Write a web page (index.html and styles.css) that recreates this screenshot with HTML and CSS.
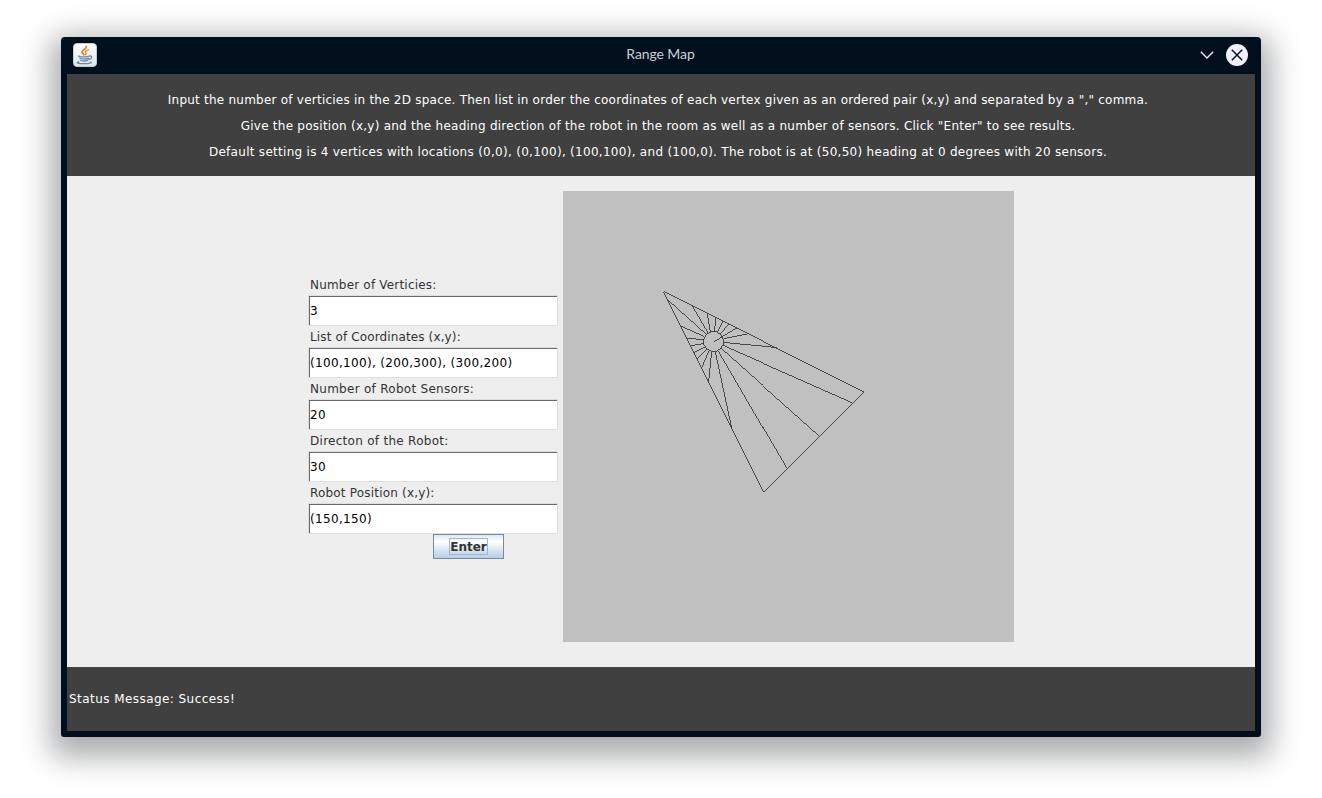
FILE: index.html
```html
<!DOCTYPE html>
<html lang="en">
<head>
<meta charset="utf-8">
<title>Range Map</title>
<link rel="stylesheet" href="styles.css">
</head>
<body>
<div class="window">
  <header class="titlebar">
    <svg class="app-icon" viewBox="0 0 24 24">
      <defs><linearGradient id="tile" x1="0" y1="0" x2="0" y2="1"><stop offset="0" stop-color="#fff"/><stop offset="1" stop-color="#dfe4e8"/></linearGradient></defs>
      <rect x=".5" y=".5" width="23" height="23" rx="3.5" fill="url(#tile)" stroke="#c3ccd3"/>
      <g fill="none" stroke-linecap="round">
        <path d="M13.3 3.3c.5 2.800-5 3.800-4.300 6.300.3 1 1.500 1.400 1.800 2.200" stroke="#ee7721" stroke-width="1.7"/>
        <path d="M15.500 6.700c-2.200.7-3.800 1.800-2.700 3.200.5.7.3 1.300-.2 1.900" stroke="#ee7721" stroke-width="1.2"/>
        <path d="M6 13c-1.500 1.200 9 1.200 10.300 0M6.700 15.200c.8 1 7.600 1 8.800.2M7.600 17.300c1.200.9 5.500.9 7 .1M16.500 13.100c3.500-.8 2.500 3-.6 3.400M5.800 19c-3 .6-1.500 1.700 5 1.700 5.500 0 8.300-.9 7.200-1.800" stroke="#6a8ca8" stroke-width="1.300"/>
      </g>
    </svg>
    <h1 class="title">Range Map</h1>
    <div class="controls">
      <svg class="shade" viewBox="0 0 14 8"><path d="M.8.8 7 7 13.200.8"/></svg>
      <svg class="close" viewBox="0 0 22 22"><circle cx="11" cy="11" r="11"/><path d="M5.800 5.800l10.400 10.400M16.200 5.800 5.800 16.200"/></svg>
    </div>
  </header>
  <section class="instructions">
    <p class="line-a">Input the number of verticies in the 2D space. Then list in order the coordinates of each vertex given as an ordered pair (x,y) and separated by a "," comma.</p>
    <p class="line-b">Give the position (x,y) and the heading direction of the robot in the room as well as a number of sensors. Click "Enter" to see results.</p>
    <p class="line-c">Default setting is 4 vertices with locations (0,0), (0,100), (100,100), and (100,0). The robot is at (50,50) heading at 0 degrees with 20 sensors.</p>
  </section>
  <main class="workspace">
    <form class="settings">
      <label class="narrow" for="verts">Number of Verticies:</label>
      <input id="verts" value="3">
      <label class="narrower" for="coords">List of Coordinates (x,y):</label>
      <input id="coords" value="(100,100), (200,300), (300,200)">
      <label for="sensors">Number of Robot Sensors:</label>
      <input id="sensors" value="20">
      <label for="heading">Directon of the Robot:</label>
      <input id="heading" value="30">
      <label class="narrow" for="position">Robot Position (x,y):</label>
      <input id="position" value="(150,150)">
      <button class="enter" type="button"><span>Enter</span></button>
    </form>
    <svg class="map" viewBox="0 0 451 451">
      <g transform="translate(.5 .5)">
        <path d="M100 100 200 300 300 200Z"/>
        <circle cx="150" cy="150" r="10"/>
        <path d="M150 150L158 145M158 145L173 136M156 142L165 132M154 140L159 129M151 140L152 126M147 140L144 122M145 141L129 114M142 143L104 109M140 145L117 135M140 148L123 147M140 152L127 154M141 155L130 161M143 157L133 167M145 159L138 176M148 160L145 191M152 160L168.500 237M155 159L223 276M157 157L255 244M159 154L288 211M160 151L213 156M160 147L185 142"/>
      </g>
    </svg>
  </main>
  <footer class="status">Status Message: Success!</footer>
</div>
</body>
</html>
```
FILE: styles.css
```css
* { box-sizing: border-box; }
body {
  margin: 0;
  padding: 37px 61px 61px;
  height: 798px;
  background: #fff;
  font: 12px/26px "DejaVu Sans", sans-serif;
  overflow: hidden;
}
.window {
  height: 700px;
  padding: 0 6px 6px;
  display: flex;
  flex-direction: column;
  background: #000f1b;
  border-radius: 4px 4px 3px 3px;
  box-shadow: 0 10px 30px 10px rgba(0, 8, 14, .34);
}
.titlebar {
  height: 37px;
  flex: none;
  display: grid;
  grid-template-columns: 80px 1fr 80px;
  align-items: center;
  padding-bottom: 2px;
}
.app-icon { width: 24px; height: 24px; margin-left: 6px; }
.title {
  margin: 0 0 2px;
  padding-right: 1px;
  text-align: center;
  font: 400 14px/20px Lato, sans-serif;
  letter-spacing: -.1px;
  color: #c9cfda;
}
.controls { display: flex; align-items: center; justify-content: flex-end; gap: 12px; padding-right: 7px; }
.shade { width: 14px; height: 8px; fill: none; stroke: #e8eaf4; stroke-width: 1.4; }
.close { width: 22px; height: 22px; fill: #f1f1fb; }
.close path { stroke: #000f1b; stroke-width: 1.4; }
.instructions {
  height: 102px;
  flex: none;
  padding: 13px 6px 0 0;
  background: #404040;
  color: #fff;
  text-align: center;
  white-space: nowrap;
}
.instructions p { margin: 0; }
.line-a { letter-spacing: .23px; }
.line-b { letter-spacing: .25px; }
.line-c { letter-spacing: .285px; }
.workspace {
  flex: 1;
  display: flex;
  justify-content: center;
  gap: 5px;
  padding: 15px 0 0;
  background: #eee;
}
.settings { width: 250px; display: flex; flex-direction: column; padding-top: 83px; }
.settings label { height: 21px; line-height: 23px; padding-left: 2px; color: #333; letter-spacing: .28px; }
.settings .narrow { letter-spacing: .19px; }
.settings .narrower { letter-spacing: .13px; }
.settings input {
  height: 31px;
  padding: 0 0 0 1px;
  border: 1px solid #dedede;
  box-shadow: inset 1px 1px #696969;
  background: #fff;
  font: 12px "DejaVu Sans", sans-serif;
  letter-spacing: .33px;
  color: #000;
}
.enter {
  width: 71px;
  height: 25px;
  flex: none;
  margin: 0 0 0 125px;
  padding: 0;
  border: 1px solid #7a8a99;
  background: linear-gradient(#dde8f3, #fff 30%, #dde8f3 60%, #b8cfe5);
  color: #333;
  font: bold 12px/17px "DejaVu Sans", sans-serif;
}
.enter span { display: inline-block; width: 39px; height: 17px; border: 1px solid #a3b8cc; vertical-align: top; }
.map {
  width: 451px;
  height: 451px;
  flex: none;
  background: silver;
  fill: none;
  stroke: #333;
  stroke-width: .85;
  shape-rendering: crispEdges;
}
.status {
  height: 64px;
  flex: none;
  padding-left: 2px;
  background: #404040;
  color: #fff;
  line-height: 64px;
  letter-spacing: .44px;
}
```
